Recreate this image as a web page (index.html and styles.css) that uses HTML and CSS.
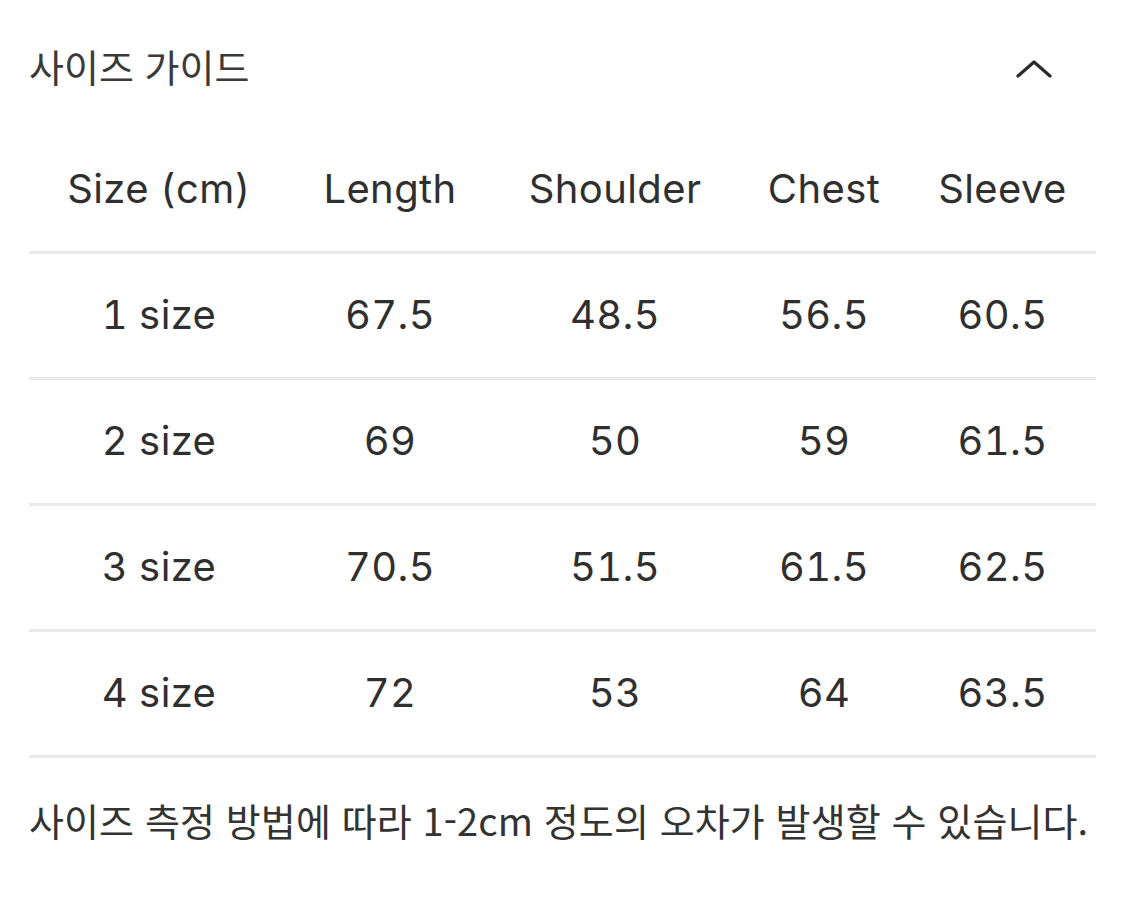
FILE: index.html
```html
<!DOCTYPE html>
<html lang="ko">
<head>
<meta charset="utf-8">
<link rel="stylesheet" href="styles.css">
</head>
<body>
<div class="page">
  <div class="head">
    <span class="title">사이즈 가이드</span>
    <svg class="chev" width="36" height="20" viewBox="0 0 36 20"><path d="M2 17 L18 3 L34 17" fill="none" stroke="#2a2a2a" stroke-width="3.2" stroke-linecap="round" stroke-linejoin="round"/></svg>
  </div>
  <div class="table">
    <div class="row hdr"><span>Size (cm)</span><span>Length</span><span>Shoulder</span><span>Chest</span><span>Sleeve</span></div>
    <div class="row"><span>1 size</span><span>67.5</span><span>48.5</span><span>56.5</span><span>60.5</span></div>
    <div class="row"><span>2 size</span><span>69</span><span>50</span><span>59</span><span>61.5</span></div>
    <div class="row"><span>3 size</span><span>70.5</span><span>51.5</span><span>61.5</span><span>62.5</span></div>
    <div class="row"><span>4 size</span><span>72</span><span>53</span><span>64</span><span>63.5</span></div>
  </div>
  <p class="note">사이즈 측정 방법에 따라 1-2cm 정도의 오차가 발생할 수 있습니다.</p>
</div>
</body>
</html>
```
FILE: styles.css
```css
html, body { margin: 0; padding: 0; background: #fff; }
body {
  font-family: Inter, "Noto Sans CJK KR", sans-serif;
  color: #333;
}
.page { padding: 0 29px; width: 1067px; }
.head {
  height: 136px;
  display: flex;
  align-items: flex-start;
  justify-content: space-between;
}
.title {
  font-family: "Noto Sans CJK KR", sans-serif;
  font-size: 38px;
  line-height: 44px;
  margin-top: 44px;
  color: #3a3a3a;
}
.chev { margin-top: 59px; margin-right: 44px; }
.table { margin-top: -8px; }
.row {
  display: grid;
  grid-template-columns: 260px 202px 248px 170px 187px;
  height: 123px;
  align-items: center;
  border-bottom: 3px solid #e9e9e9;
  font-size: 40px;
  letter-spacing: 0.4px;
  font-variant-numeric: tabular-nums;
  text-align: center;
  color: #2f2f2f;
}
.row span { display: block; padding-bottom: 3px; }
.note {
  margin: 0;
  padding-top: 39px;
  font-family: "Noto Sans CJK KR", sans-serif;
  font-size: 38px;
  line-height: 46px;
  letter-spacing: 0.1px;
  color: #333;
  white-space: nowrap;
}
```
